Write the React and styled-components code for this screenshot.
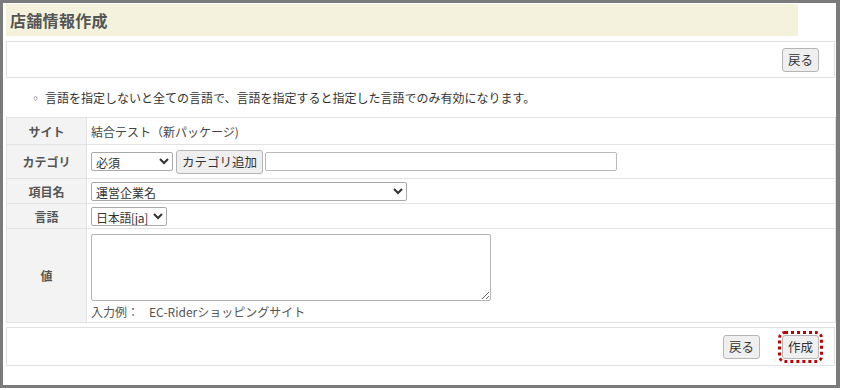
import React from 'react'
import styled, { createGlobalStyle } from 'styled-components'

const GlobalStyle = createGlobalStyle`
    html, body {
        margin: 0;
        padding: 0;
        background: #fff;
    }
    body {
        font-family: "Noto Sans CJK JP", "Noto Sans", sans-serif;
        font-size: 12px;
        color: #333;
    }
`

export default function App() {
    return (
        <>
            <GlobalStyle />
            <Frame>
                <TitleBar>
                    <h1>店舗情報作成</h1>
                </TitleBar>
                <ButtonPanel>
                    <Button>戻る</Button>
                </ButtonPanel>
                <Note>
                    <span className='bullet'>◦</span>
                    言語を指定しないと全ての言語で、言語を指定すると指定した言語でのみ有効になります。
                </Note>
                <FormTable>
                    <tbody>
                        <Row h={27}>
                            <Label>サイト</Label>
                            <Cell>結合テスト（新パッケージ)</Cell>
                        </Row>
                        <Row h={34}>
                            <Label>カテゴリ</Label>
                            <Cell>
                                <Inline>
                                    <Select w={82} defaultValue='必須'>
                                        <option>必須</option>
                                        <option>任意</option>
                                    </Select>
                                    <Button wide>カテゴリ追加</Button>
                                    <TextInput type='text' />
                                </Inline>
                            </Cell>
                        </Row>
                        <Row h={25}>
                            <Label>項目名</Label>
                            <Cell>
                                <Select w={316} defaultValue='運営企業名'>
                                    <option>運営企業名</option>
                                </Select>
                            </Cell>
                        </Row>
                        <Row h={25}>
                            <Label>言語</Label>
                            <Cell>
                                <Select w={76} tight defaultValue='日本語[ja]'>
                                    <option>日本語[ja]</option>
                                    <option>English[en]</option>
                                </Select>
                            </Cell>
                        </Row>
                        <Row h={94}>
                            <Label>値</Label>
                            <Cell>
                                <TextArea />
                                <Example>
                                    <span>入力例：</span>
                                    <span>EC-Riderショッピングサイト</span>
                                </Example>
                            </Cell>
                        </Row>
                    </tbody>
                </FormTable>
                <ButtonPanel bottom>
                    <Button>戻る</Button>
                    <Button focused>作成</Button>
                </ButtonPanel>
            </Frame>
        </>
    )
}

const Frame = styled.div`
    box-sizing: border-box;
    width: 840px;
    height: 388px;
    border: 3px solid #7b7b7b;
    border-right-width: 4px;
    padding: 1px 1px 0 3px;
    background: #fff;
`

const TitleBar = styled.div`
    width: 792px;
    height: 32px;
    background: #f4f2dc;
    display: flex;
    align-items: center;
    padding-left: 4px;
    box-sizing: border-box;

    h1 {
        margin: 0;
        font-size: 16px;
        font-weight: bold;
        color: #555;
        letter-spacing: 0.3px;
    }
`

const ButtonPanel = styled.div`
    box-sizing: border-box;
    height: ${p => (p.bottom ? 39 : 37)}px;
    margin-top: ${p => (p.bottom ? 4 : 5)}px;
    border: 1px solid #e0e0e0;
    display: flex;
    justify-content: flex-end;
    align-items: center;
    gap: 22px;
    padding-right: 15px;
`

const Button = styled.button`
    box-sizing: border-box;
    height: 24px;
    min-width: 37px;
    padding: 0 ${p => (p.wide ? 5 : 5)}px;
    margin: ${p => (p.wide ? '0 2px 0 3px' : '0')};
    border: 1px solid #b5b5b5;
    border-radius: 3px;
    background: #efefef;
    font-family: "Noto Sans CJK JP", sans-serif;
    font-size: 12.5px;
    color: #333;
    outline: ${p => (p.focused ? '3px dotted #c00000' : 'none')};
    outline-offset: 1px;
`

const Note = styled.p`
    margin: 0;
    height: 39px;
    display: flex;
    align-items: center;
    padding-left: 24px;
    font-size: 12px;
    color: #333;

    .bullet {
        font-size: 11px;
        margin-right: 4px;
        color: #555;
    }
`

const FormTable = styled.table`
    width: 830px;
    border-collapse: collapse;
    border: 1px solid #dedede;
`

const Row = styled.tr`
    height: ${p => p.h}px;
    td, th {
        border: 1px solid #e2e2e2;
    }
`

const Label = styled.th`
    width: 79px;
    background: #f3f3f3;
    color: #555;
    font-size: 12px;
    font-weight: bold;
    text-align: center;
    padding: 0;
`

const Cell = styled.td`
    padding: 0 4px;
    color: #444;
    font-size: 12px;
    vertical-align: middle;
`

const Inline = styled.div`
    display: flex;
    align-items: center;
`

const Select = styled.select`
    box-sizing: border-box;
    width: ${p => p.w}px;
    height: 19px;
    border: 1px solid #a9a9a9;
    border-radius: 2px;
    background: #fff;
    font-family: "Noto Sans CJK JP", sans-serif;
    font-size: 12px;
    letter-spacing: ${p => (p.tight ? '-0.3px' : '0')};
    color: #333;
    padding: 0;
    display: block;
`

const TextInput = styled.input`
    box-sizing: border-box;
    width: 352px;
    height: 19px;
    border: 1px solid #b9b9b9;
    border-radius: 2px;
`

const TextArea = styled.textarea`
    box-sizing: border-box;
    display: block;
    width: 400px;
    height: 67px;
    margin-top: 2px;
    border: 1px solid #b5b5b5;
    border-radius: 2px;
`

const Example = styled.div`
    display: flex;
    gap: 10px;
    margin-top: 3px;
    color: #555;
    font-size: 12px;
    line-height: 16px;
`
